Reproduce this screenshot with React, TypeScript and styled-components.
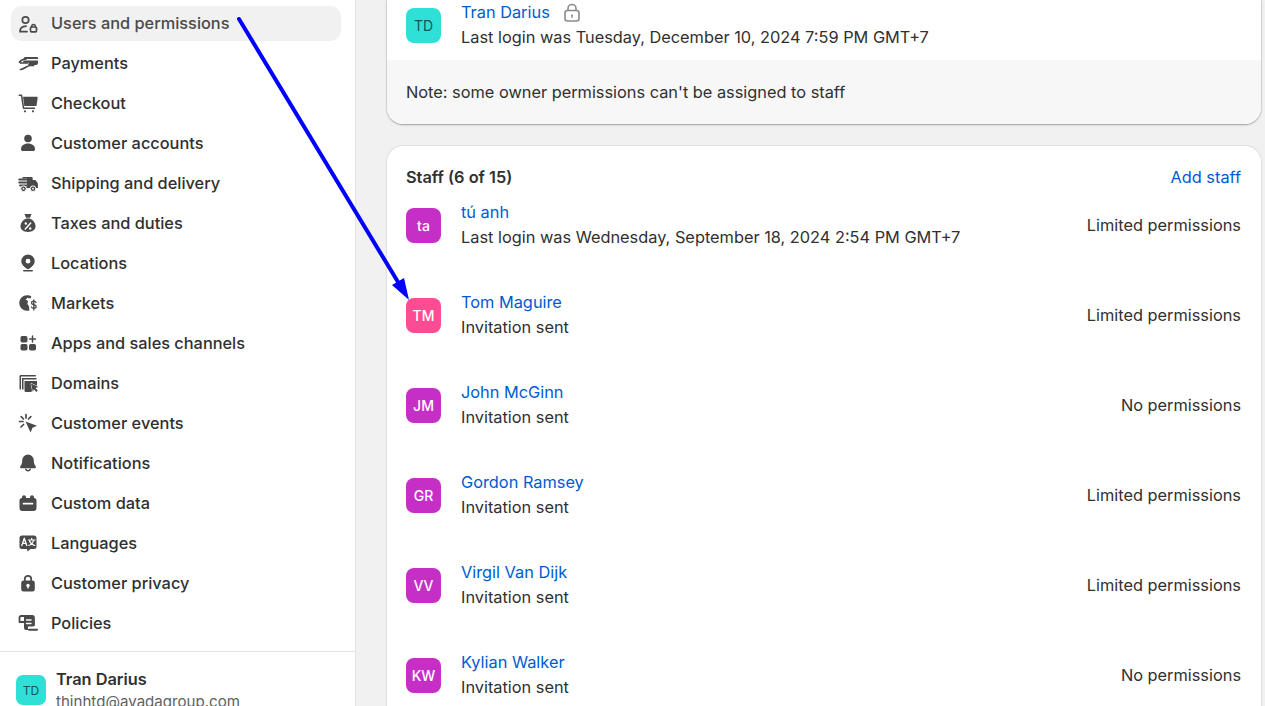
import React from 'react';
import styled, { createGlobalStyle } from 'styled-components';

const GlobalStyle = createGlobalStyle`
  html, body {
    margin: 0;
    height: 100%;
    overflow: hidden;
    background: #f1f1f1;
  }
  body {
    font-family: Inter, "Noto Sans", sans-serif;
    font-size: 16.33px;
    color: #303030;
  }
`;

const Page = styled.div`
  position: relative;
  display: flex;
  width: 1265px;
  height: 706px;
  overflow: hidden;
`;

const Sidebar = styled.aside`
  display: flex;
  flex-direction: column;
  flex: 0 0 356px;
  box-sizing: border-box;
  height: 706px;
  background: #fff;
  border-right: 1px solid #e3e3e3;
`;

const Nav = styled.nav`
  display: flex;
  flex-direction: column;
  flex-shrink: 0;
  gap: 5px;
  padding: 6px 14px 10px 11px;
`;

const NavItem = styled.div<{ $active?: boolean }>`
  display: flex;
  align-items: center;
  gap: 13px;
  box-sizing: border-box;
  height: 35px;
  padding: 0 0 2px 7px;
  border-radius: 10px;
  font-weight: 500;
  color: ${(p) => (p.$active ? '#4a4a4a' : '#303030')};
  background: ${(p) => (p.$active ? '#f1f1f1' : 'transparent')};
  svg {
    flex: 0 0 20px;
    color: #4a4a4a;
  }
`;

const SidebarFooter = styled.div`
  display: flex;
  align-items: center;
  flex-shrink: 0;
  gap: 10px;
  padding: 15px 16px;
  border-top: 1px solid #e3e3e3;
`;

const Avatar = styled.div<{ $bg: string; $dark?: boolean; $small?: boolean }>`
  display: flex;
  align-items: center;
  justify-content: center;
  flex: 0 0 ${(p) => (p.$small ? 30 : 35)}px;
  height: ${(p) => (p.$small ? 30 : 35)}px;
  border-radius: ${(p) => (p.$small ? 7 : 8)}px;
  background: ${(p) => p.$bg};
  color: ${(p) => (p.$dark ? '#0c5a56' : '#fff')};
  font-size: ${(p) => (p.$small ? 12 : 14)}px;
  font-weight: ${(p) => (p.$dark ? 400 : 500)};
`;

const FooterName = styled.div`
  font-weight: 600;
  line-height: 24px;
`;

const FooterEmail = styled.div`
  line-height: 22px;
  font-size: 15.1px;
  color: #616161;
`;

const Main = styled.main`
  display: flex;
  flex-direction: column;
  flex: 1;
  gap: 22px;
  padding: 0 4px 0 31px;
`;

const OwnerCard = styled.section`
  flex-shrink: 0;
  background: #fff;
  border-radius: 0 0 16px 16px;
  box-shadow: 0 1px 2px rgba(0, 0, 0, 0.3), 0 0 0 1px rgba(0, 0, 0, 0.06);
  overflow: hidden;
`;

const OwnerRow = styled.div`
  display: flex;
  align-items: center;
  gap: 20px;
  padding: 0 20px 10px 19px;
`;

const Note = styled.div`
  padding: 20px 20px 20px 19px;
  line-height: 24px;
  background: #f7f7f7;
`;

const StaffCard = styled.section`
  display: flex;
  flex-direction: column;
  flex-shrink: 0;
  gap: 12px;
  padding: 20px 20px 20px 19px;
  background: #fff;
  border-radius: 16px 16px 0 0;
  box-shadow: 0 0 0 1px rgba(0, 0, 0, 0.07);
`;

const StaffHeader = styled.div`
  display: flex;
  justify-content: space-between;
  align-items: center;
  line-height: 22px;
`;

const StaffTitle = styled.h2`
  margin: 0;
  font-size: 16.33px;
  font-weight: 600;
`;

const StaffList = styled.div`
  display: flex;
  flex-direction: column;
  gap: 40px;
`;

const StaffRow = styled.div`
  display: flex;
  align-items: center;
  gap: 20px;
`;

const RowBody = styled.div`
  flex: 1;
  line-height: 25px;
`;

const NameLine = styled.div`
  display: flex;
  align-items: center;
  gap: 13px;
`;

const Link = styled.a`
  color: #005bd3;
  text-decoration: none;
`;

const Permission = styled.div`
  color: #303030;
`;

const ArrowLayer = styled.svg`
  position: absolute;
  left: 0;
  top: 0;
  pointer-events: none;
`;

const Ico = ({ children }: { children: React.ReactNode }) => (
  <svg width="20" height="20" viewBox="0 0 20 20" fill="currentColor">
    {children}
  </svg>
);

const line = { fill: 'none', stroke: 'currentColor', strokeWidth: 1.5, strokeLinecap: 'round', strokeLinejoin: 'round' } as const;

const icons: Record<string, React.ReactNode> = {
  users: (
    <>
      <circle cx="7.5" cy="7" r="3.2" {...line} strokeWidth={1.7} />
      <path d="M2 18.5c0-3 2-5 6-5.3M2 18.700h7" {...line} strokeWidth={1.7} />
      <rect x="12.5" y="14" width="6" height="4.800" rx="1" {...line} strokeWidth={1.7} />
      <path d="M13.700 14v-.8a1.800 1.800 0 0 1 3.600 0v.8" {...line} />
    </>
  ),
  payments: (
    <>
      <path d="M6.500 4h12.500a1 1 0 0 1 1 1v1H5.500z" />
      <path d="M5.500 7.500H20V10a2 2 0 0 1-2 2H10l1-2.200H5z" />
      <path d="M1.500 9c1.800-2 4-3 6.500-3M2.500 10h7M2.500 16.500c4 0 5.500-3.500 9.500-4h3.500" {...line} strokeWidth={1.7} />
    </>
  ),
  checkout: (
    <>
      <path d="M1.200 2.200h2.300l2 13h11" {...line} />
      <path d="M5 3.800h13.800a.9.900 0 0 1 .9 1l-1.100 7.400a1 1 0 0 1-1 .9H6.300z" />
      <circle cx="7" cy="18.300" r="1.100" />
      <circle cx="15" cy="18.300" r="1.100" />
    </>
  ),
  customer: (
    <>
      <circle cx="10" cy="5.500" r="3.800" />
      <path d="M3 16.200c0-3.500 3-5.700 7-5.700s7 2.200 7 5.700c0 1-.8 1.800-1.800 1.800H4.800C3.800 18 3 17.200 3 16.200z" />
    </>
  ),
  truck: (
    <>
      <path d="M4.500 4h9a1.200 1.200 0 0 1 1.200 1.200V7h2c.5 0 .9.200 1.200.6l2 2.900V15H7.500v-1H9V5.500H4.500z" />
      <path d="M1.200 6.500h7.300M1.200 9.500h7.300M2 12.500h6.500" {...line} strokeWidth={1.8} />
      <circle cx="5.500" cy="15.700" r="2.800" stroke="#fff" strokeWidth="1" />
      <circle cx="5.500" cy="15.700" r=".9" fill="#fff" />
      <circle cx="15" cy="15.700" r="2.800" stroke="#fff" strokeWidth="1" />
      <circle cx="15" cy="15.700" r=".9" fill="#fff" />
    </>
  ),
  taxes: (
    <>
      <path d="M6.500 1h7l-1.500 3.800H8z" />
      <path d="M8 5.500h4c3.200 1.500 5.500 4.500 5.500 7.800 0 3.200-2.800 5.700-7.500 5.700s-7.500-2.500-7.500-5.700c0-3.300 2.300-6.300 5.500-7.800z" />
      <path d="M12.700 10l-5.400 6" fill="none" stroke="#fff" strokeWidth="1.500" strokeLinecap="round" />
      <circle cx="7.800" cy="10.500" r="1.200" fill="#fff" />
      <circle cx="12.200" cy="15.500" r="1.200" fill="#fff" />
    </>
  ),
  location: (
    <>
      <path fillRule="evenodd" d="M10 1.500a6.700 6.700 0 0 0-6.700 6.700c0 3.700 3.800 6.500 6.700 8 2.900-1.500 6.700-4.300 6.700-8A6.700 6.700 0 0 0 10 1.500zm0 4.300a2.400 2.400 0 1 1 0 4.800 2.400 2.400 0 0 1 0-4.800z" />
      <rect x="5" y="17" width="10" height="1.600" rx=".8" />
    </>
  ),
  markets: (
    <>
      <path d="M9 2.200c1.700 0 3.200.5 4.400 1.400l-1 2-2.900-.9-1.800 1.700 2.300 1.700-.6 2.800 1.600 2.400.4 4.200c-.7.200-1.500.3-2.400.3A7.800 7.800 0 0 1 9 2.200z" />
      <path d="M18 9.500c-.5-1-1.300-1.300-2.300-1.300-1.200 0-2.200.6-2.200 1.800 0 2.300 4.700 1.200 4.700 3.500 0 1.200-1 1.800-2.300 1.800-1.100 0-2-.4-2.500-1.300M15.800 7v10" fill="none" stroke="currentColor" strokeWidth="1.300" strokeLinecap="round" />
    </>
  ),
  apps: (
    <>
      <rect x="2.500" y="3" width="7" height="6.500" rx="1.700" />
      <rect x="2.500" y="11" width="7" height="6.500" rx="1.700" />
      <rect x="11" y="11" width="7" height="6.500" rx="1.700" />
      <path d="M14.500 3v6M11.500 6h6" {...line} />
    </>
  ),
  domains: (
    <>
      <path d="M1.500 3.300c0-.7.600-1.300 1.300-1.300h15v1.500H3v13H1.500z" />
      <path d="M4 5h14.500v1.500H5.500v10H4z" />
      <path d="M6.500 8H19v5l-6 6H8a1.500 1.500 0 0 1-1.500-1.500z" />
      <path d="M13 10.500l7.200 3.300-2.700 1.100 2.300 2.600-1.500 1.400-2.400-2.600-1 2.700z" stroke="#fff" strokeWidth="1" paintOrder="stroke" />
    </>
  ),
  events: (
    <>
      <path d="M7.500 8.500l11.500 4.300-4.500 1.900-1.900 4.800z" />
      <path d="M8 1.500v3.500M1.500 8.500H5M3.200 3.700l2.300 2.300M3 14l2.500-2.500M12.800 3.700l-2.300 2.300" {...line} strokeWidth={1.7} />
    </>
  ),
  bell: (
    <>
      <path d="M10 1.500a5.800 5.800 0 0 0-5.800 5.800c0 3-.6 4.400-2 6.200-.5.700-.1 1.700.8 1.700h14c.9 0 1.300-1 .8-1.700-1.400-1.800-2-3.200-2-6.200A5.800 5.800 0 0 0 10 1.500z" />
      <path d="M7.800 16.200a2.300 2.300 0 0 0 4.400 0" {...line} />
    </>
  ),
  data: (
    <path
      fillRule="evenodd"
      d="M4 5V4.200a2 2 0 0 1 4 0V5h4v-.8a2 2 0 0 1 4 0V5a2.500 2.500 0 0 1 2.500 2.500V15a3 3 0 0 1-3 3h-11a3 3 0 0 1-3-3V7.500A2.500 2.500 0 0 1 4 5zm1.500 4.800a.9.900 0 0 0 0 1.800h9a.9.900 0 0 0 0-1.800z"
    />
  ),
  languages: (
    <>
      <path d="M4 2.500h12a2.500 2.500 0 0 1 2.500 2.500v8.500a2.500 2.500 0 0 1-2.500 2.500h-3.500L9.500 18.500 9 16H4a2.500 2.500 0 0 1-2.500-2.500V5A2.500 2.500 0 0 1 4 2.500z" />
      <path d="M3.800 12.500l2.500-7.300 2.500 7.300M4.800 10.300h3" fill="none" stroke="#fff" strokeWidth="1.300" strokeLinecap="round" strokeLinejoin="round" />
      <path d="M10.500 7h6.500M13.700 5.300V7M15.500 7c-.5 2.800-2.200 4.600-4.700 5.500M11.500 8c.7 2 2.700 3.700 5.200 4.500" fill="none" stroke="#fff" strokeWidth="1.200" strokeLinecap="round" />
    </>
  ),
  privacy: (
    <>
      <path d="M6.800 8V6a3.200 3.200 0 0 1 6.400 0v2" fill="none" stroke="currentColor" strokeWidth="1.800" />
      <rect x="3.200" y="7.500" width="13.600" height="11" rx="2.500" />
      <circle cx="10" cy="12.500" r="1.700" fill="#fff" />
      <rect x="9.300" y="12.500" width="1.400" height="3" fill="#fff" />
    </>
  ),
  policies: (
    <>
      <path d="M3 3h11a2 2 0 0 1 2 2v8M3 3a1.500 1.500 0 0 0-1.500 1.500V9H6" fill="none" stroke="currentColor" strokeWidth="1.800" strokeLinejoin="round" />
      <path d="M6 3.500h9.500v10H10v3.500H8a2 2 0 0 1-2-2z" />
      <path d="M11 16.800h8" {...line} strokeWidth={2} />
      <path d="M8.500 7h4.500M8.500 10.500h4.500" fill="none" stroke="#fff" strokeWidth="1.400" strokeLinecap="round" />
    </>
  ),
};

const navItems = [
  ['users', 'Users and permissions'],
  ['payments', 'Payments'],
  ['checkout', 'Checkout'],
  ['customer', 'Customer accounts'],
  ['truck', 'Shipping and delivery'],
  ['taxes', 'Taxes and duties'],
  ['location', 'Locations'],
  ['markets', 'Markets'],
  ['apps', 'Apps and sales channels'],
  ['domains', 'Domains'],
  ['events', 'Customer events'],
  ['bell', 'Notifications'],
  ['data', 'Custom data'],
  ['languages', 'Languages'],
  ['privacy', 'Customer privacy'],
  ['policies', 'Policies'],
];

const staff = [
  { id: 'ta', name: 'tú anh', sub: 'Last login was Wednesday, September 18, 2024 2:54 PM GMT+7', perm: 'Limited permissions', bg: '#c62fc6' },
  { id: 'TM', name: 'Tom Maguire', sub: 'Invitation sent', perm: 'Limited permissions', bg: '#fe4c93' },
  { id: 'JM', name: 'John McGinn', sub: 'Invitation sent', perm: 'No permissions', bg: '#c62fc6' },
  { id: 'GR', name: 'Gordon Ramsey', sub: 'Invitation sent', perm: 'Limited permissions', bg: '#c62fc6' },
  { id: 'VV', name: 'Virgil Van Dijk', sub: 'Invitation sent', perm: 'Limited permissions', bg: '#c62fc6' },
  { id: 'KW', name: 'Kylian Walker', sub: 'Invitation sent', perm: 'No permissions', bg: '#c62fc6' },
];

const App = () => {
  return (
    <Page>
      <GlobalStyle />
      <Sidebar>
        <Nav>
          {navItems.map(([icon, label], i) => (
            <NavItem key={label} $active={i === 0}>
              <Ico>{icons[icon]}</Ico>
              {label}
            </NavItem>
          ))}
        </Nav>
        <SidebarFooter>
          <Avatar $bg="#2ee0d5" $dark $small>
            TD
          </Avatar>
          <div>
            <FooterName>Tran Darius</FooterName>
            <FooterEmail>thinhtd@avadagroup.com</FooterEmail>
          </div>
        </SidebarFooter>
      </Sidebar>
      <Main>
        <OwnerCard>
          <OwnerRow>
            <Avatar $bg="#2ee0d5" $dark>
              TD
            </Avatar>
            <RowBody>
              <NameLine>
                <Link>Tran Darius</Link>
                <svg width="18" height="20" viewBox="0 0 18 20" fill="none" stroke="#8a8a8a" strokeWidth="1.6">
                  <rect x="2" y="7.5" width="14" height="10.5" rx="2.5" />
                  <path d="M5 7.500V5.500a4 4 0 0 1 8 0v2" />
                  <circle cx="9" cy="12.500" r="1" fill="#8a8a8a" stroke="none" />
                  <path d="M9 12.500v2.500" strokeWidth="1.2" />
                </svg>
              </NameLine>
              <div>Last login was Tuesday, December 10, 2024 7:59 PM GMT+7</div>
            </RowBody>
          </OwnerRow>
          <Note>Note: some owner permissions can't be assigned to staff</Note>
        </OwnerCard>
        <StaffCard>
          <StaffHeader>
            <StaffTitle>Staff (6 of 15)</StaffTitle>
            <Link>Add staff</Link>
          </StaffHeader>
          <StaffList>
            {staff.map((s) => (
              <StaffRow key={s.id}>
                <Avatar $bg={s.bg}>{s.id}</Avatar>
                <RowBody>
                  <Link>{s.name}</Link>
                  <div>{s.sub}</div>
                </RowBody>
                <Permission>{s.perm}</Permission>
              </StaffRow>
            ))}
          </StaffList>
        </StaffCard>
      </Main>
      <ArrowLayer width="1265" height="706" viewBox="0 0 1265 706">
        <path d="M239 19L398 282" stroke="#0000ff" strokeWidth="4" strokeLinecap="round" fill="none" />
        <path d="M409 300L392 285 404 278z" fill="#0000ff" />
      </ArrowLayer>
    </Page>
  );
};

export default App;
